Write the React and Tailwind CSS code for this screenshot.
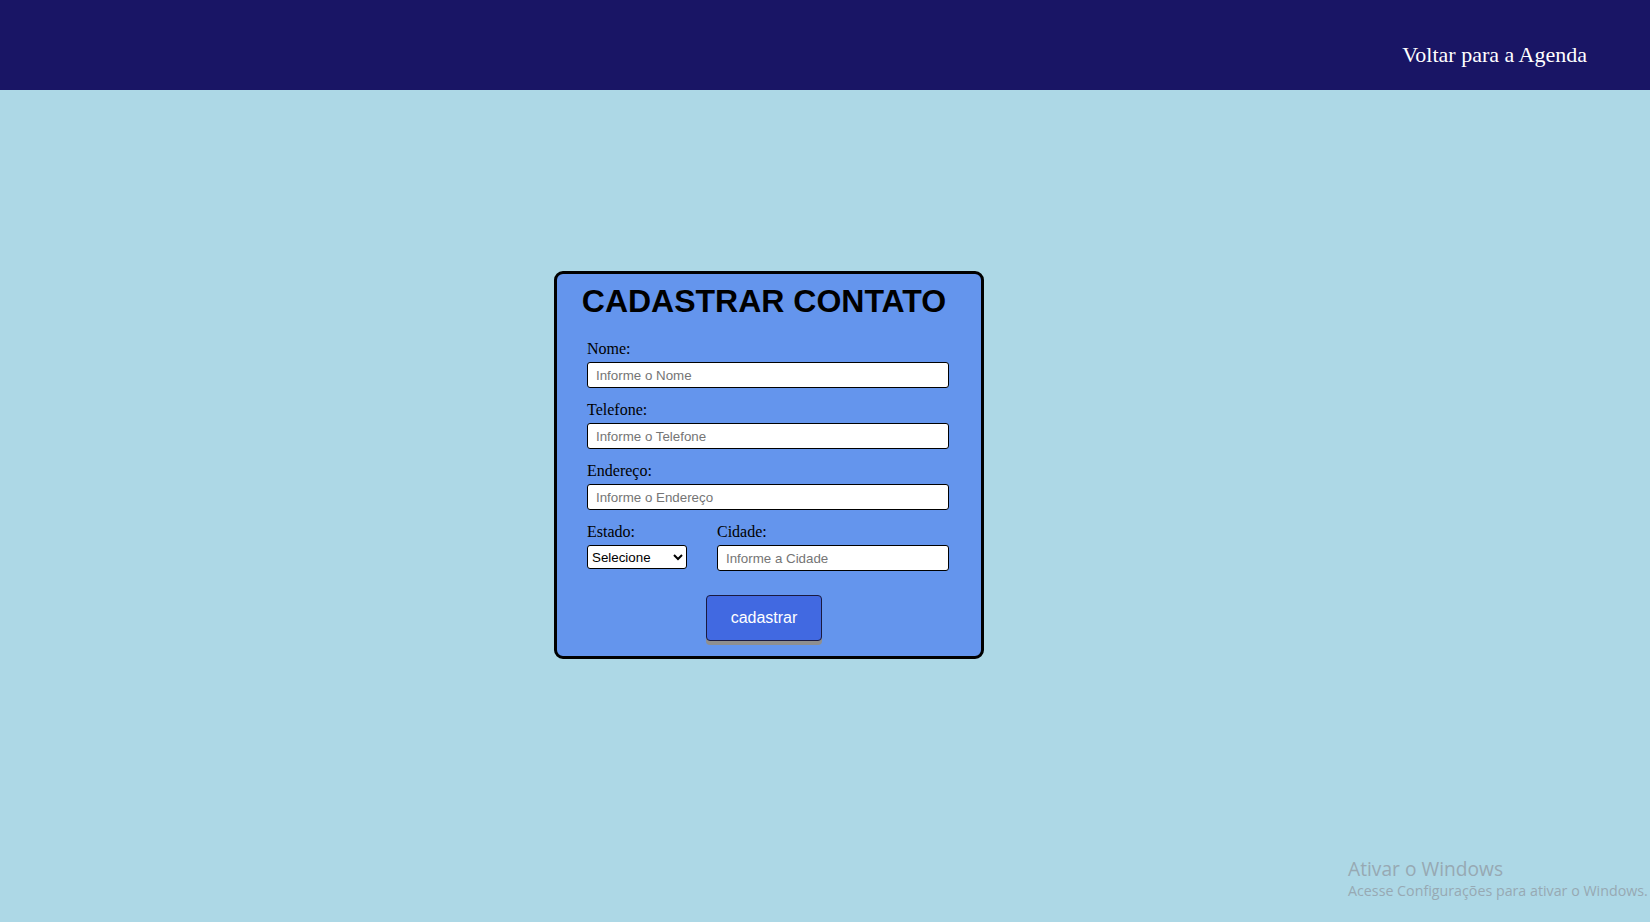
import React from "react";

function Field({ label, placeholder }) {
  return (
    <div className="mb-[13px]">
      <label className="block text-[16px] leading-[18px] mb-[4px] text-black font-['Liberation_Serif','Times_New_Roman',serif]">
        {label}
      </label>
      <input
        type="text"
        placeholder={placeholder}
        className="block w-[362px] h-[26px] bg-white border border-black rounded-[3px] px-[8px] text-[13.33px] text-black placeholder:text-[#757575] outline-none font-['Liberation_Sans',Arial,sans-serif]"
      />
    </div>
  );
}

export default function App() {
  return (
    <div className="relative min-h-[922px] w-full bg-[#add8e6] overflow-hidden">
      <header className="h-[90px] bg-[#191565] flex justify-end items-start pt-[42px] pr-[63px]">
        <a className="text-white text-[22px] leading-[25px] cursor-pointer font-['Liberation_Serif','Times_New_Roman',serif]">
          Voltar para a Agenda
        </a>
      </header>

      <div className="ml-[554px] mt-[181px] w-[430px] bg-[#6495ed] border-[3px] border-black rounded-[9px] pt-[9px] pb-[15px] pl-[30px] pr-[40px]">
        <h1 className="-mx-[6px] text-center text-[32px] leading-[37px] font-bold text-black whitespace-nowrap font-['Liberation_Sans',Arial,sans-serif]">
          CADASTRAR CONTATO
        </h1>
        <form className="mt-[20px]" onSubmit={(e) => e.preventDefault()}>
          <Field label="Nome:" placeholder="Informe o Nome" />
          <Field label="Telefone:" placeholder="Informe o Telefone" />
          <Field label="Endereço:" placeholder="Informe o Endereço" />
          <div className="flex gap-[30px]">
            <div>
              <label className="block text-[16px] leading-[18px] mb-[4px] text-black font-['Liberation_Serif','Times_New_Roman',serif]">
                Estado:
              </label>
              <select
                className="block w-[100px] h-[24px] bg-white border border-black rounded-[3px] pl-0 text-[13.33px] text-black font-['Liberation_Sans',Arial,sans-serif]"
                defaultValue=""
              >
                <option value="">Selecione</option>
                <option>SP</option>
                <option>RJ</option>
                <option>MG</option>
              </select>
            </div>
            <div>
              <label className="block text-[16px] leading-[18px] mb-[4px] text-black font-['Liberation_Serif','Times_New_Roman',serif]">
                Cidade:
              </label>
              <input
                type="text"
                placeholder="Informe a Cidade"
                className="block w-[232px] h-[26px] bg-white border border-black rounded-[3px] px-[8px] text-[13.33px] text-black placeholder:text-[#757575] outline-none font-['Liberation_Sans',Arial,sans-serif]"
              />
            </div>
          </div>
          <div className="flex justify-center mt-[24px]">
            <button
              type="submit"
              className="w-[116px] h-[46px] bg-[#4169e1] text-white text-[16px] border border-[#1a1a40] rounded-[4px] shadow-[0_4px_0_#8f8f8f] font-['Liberation_Sans',Arial,sans-serif]"
            >
              cadastrar
            </button>
          </div>
        </form>
      </div>

      <div className="absolute left-[1348px] top-[856px] text-[#97a9b3] pointer-events-none font-['Open_Sans','Noto_Sans',sans-serif]">
        <div className="text-[19.2px] leading-[25px]">Ativar o Windows</div>
        <div className="text-[14.25px] leading-[20px] whitespace-nowrap">Acesse Configurações para ativar o Windows.</div>
      </div>
    </div>
  );
}
